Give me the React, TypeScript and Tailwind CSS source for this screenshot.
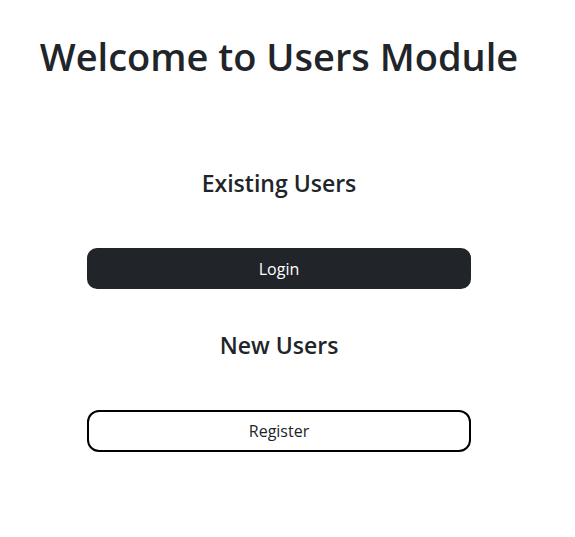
export default function App() {
  return (
    <div className="min-h-screen bg-white text-[#212529] font-['Open_Sans',sans-serif]">
      <div className="w-[558px] flex flex-col items-center">
        <h1 className="mt-[32px] text-[38px] leading-[48px] font-semibold">Welcome to Users Module</h1>

        <h4 className="mt-[89px] text-[23px] leading-[29px] font-semibold">Existing Users</h4>
        <button className="mt-[50px] w-[384px] h-[41px] rounded-[10px] bg-[#212529] text-white text-[16px]">
          Login
        </button>

        <h4 className="mt-[42px] text-[23px] leading-[29px] font-semibold">New Users</h4>
        <button className="mt-[50px] w-[384px] h-[42px] rounded-[12px] border-2 border-black bg-white text-[#212529] text-[16px]">
          Register
        </button>
      </div>
    </div>
  )
}
